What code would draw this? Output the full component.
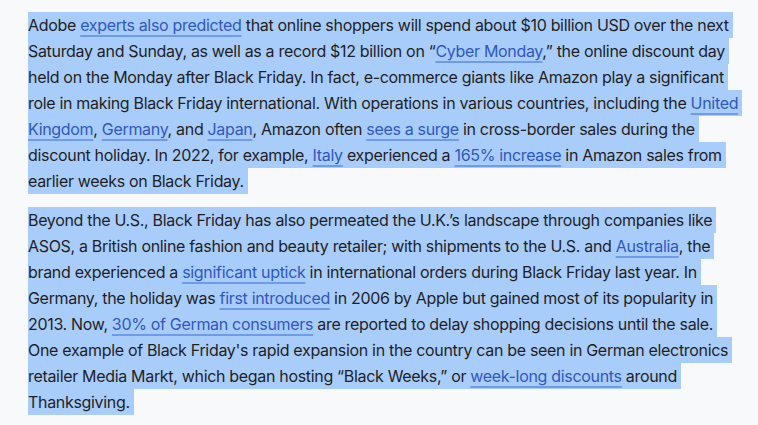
import React from 'react'

type Seg = string | { link: string }

const paragraphs: Seg[][][] = [
  [
    ['Adobe ', { link: 'experts also predicted' }, ' that online shoppers will spend about $10 billion USD over the next'],
    ['Saturday and Sunday, as well as a record $12 billion on “', { link: 'Cyber Monday' }, ',” the online discount day'],
    ['held on the Monday after Black Friday. In fact, e-commerce giants like Amazon play a significant'],
    ['role in making Black Friday international. With operations in various countries, including the ', { link: 'United' }],
    [{ link: 'Kingdom' }, ', ', { link: 'Germany' }, ', and ', { link: 'Japan' }, ', Amazon often ', { link: 'sees a surge' }, ' in cross-border sales during the'],
    ['discount holiday. In 2022, for example, ', { link: 'Italy' }, ' experienced a ', { link: '165% increase' }, ' in Amazon sales from'],
    ['earlier weeks on Black Friday.'],
  ],
  [
    ['Beyond the U.S., Black Friday has also permeated the U.K.’s landscape through companies like'],
    ['ASOS, a British online fashion and beauty retailer; with shipments to the U.S. and ', { link: 'Australia' }, ', the'],
    ['brand experienced a ', { link: 'significant uptick' }, ' in international orders during Black Friday last year. In'],
    ['Germany, the holiday was ', { link: 'first introduced' }, ' in 2006 by Apple but gained most of its popularity in'],
    ['2013. Now, ', { link: '30% of German consumers' }, ' are reported to delay shopping decisions until the sale.'],
    ["One example of Black Friday's rapid expansion in the country can be seen in German electronics"],
    ['retailer Media Markt, which began hosting “Black Weeks,” or ', { link: 'week-long discounts' }, ' around'],
    ['Thanksgiving.'],
  ],
]

export default function App() {
  return (
    <div className="min-h-screen bg-[#f8f9fb] px-[28px] pt-[12px] text-[16px] tracking-[-0.32px] text-[#1f1f1f] font-['Inter','Liberation_Sans',sans-serif]">
      {paragraphs.map((lines, p) => (
        <p key={p} className="mb-[13px]">
          {lines.map((line, i) => (
            <span key={i} className="block">
              <span className="inline-block bg-[#a9cdfb] leading-[26px] whitespace-pre pr-[4px]">
                {line.map((seg, j) =>
                  typeof seg === 'string' ? (
                    <React.Fragment key={j}>{seg}</React.Fragment>
                  ) : (
                    <a
                      key={j}
                      href="#"
                      className="text-[#2f58c0] underline decoration-[#6f9be8] decoration-2 underline-offset-[4px]"
                    >
                      {seg.link}
                    </a>
                  )
                )}
              </span>
            </span>
          ))}
        </p>
      ))}
    </div>
  )
}
